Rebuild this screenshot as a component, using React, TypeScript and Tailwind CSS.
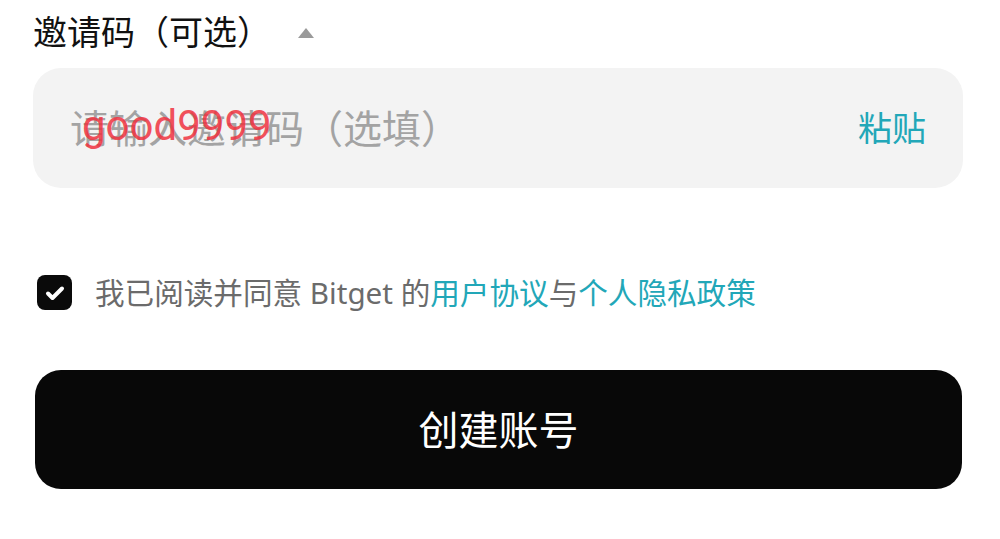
import React from 'react';

const font = "font-['Noto_Sans','Noto_Sans_CJK_SC',sans-serif]";

const App = () => {
  return (
    <div className={`w-[1000px] h-[539px] bg-white ${font} overflow-hidden`}>
      <div className="pl-[33px] pr-[37px] pt-[8px]">
        {/* label */}
        <div className="flex items-center h-[48px]">
          <span className="text-[34px] leading-none text-[#111111]">邀请码（可选）</span>
          <span className="ml-[27px] mt-[2px] w-0 h-0 border-l-[8px] border-r-[8px] border-b-[10px] border-l-transparent border-r-transparent border-b-[#9a9a9a]" />
        </div>

        {/* invite code input */}
        <div className="mt-[12px] h-[120px] rounded-[28px] bg-[#f3f3f3] flex items-center pl-[37px] pr-[37px]">
          <div className="relative flex-1">
            <span className="text-[39px] leading-none text-[#a3a3a3]">请输入邀请码（选填）</span>
            <span className="absolute left-[12px] top-[-3px] text-[42px] leading-none font-['Roboto',sans-serif] text-[#f0323f]/85">
              good9999
            </span>
          </div>
          <span className="text-[34px] leading-none text-[#22a7b8]">粘贴</span>
        </div>

        {/* agreement */}
        <div className="mt-[87px] flex items-center pl-[4px]">
          <span className="w-[35px] h-[35px] rounded-[8px] bg-[#0a0a0a] flex items-center justify-center">
            <svg width="24" height="24" viewBox="0 0 24 24" fill="none" stroke="white" strokeWidth="4" strokeLinecap="round" strokeLinejoin="round">
              <path d="M5 12.5l4.5 4.5L19 7.5" />
            </svg>
          </span>
          <span className="ml-[23px] text-[29.6px] leading-none text-[#6b6b6b] whitespace-nowrap">
            我已阅读并同意 Bitget 的<span className="text-[#22a7b8]">用户协议</span>与<span className="text-[#22a7b8]">个人隐私政策</span>
          </span>
        </div>

        {/* submit */}
        <button className="mt-[60px] ml-[2px] w-[927px] h-[119px] rounded-[26px] bg-[#080808] flex items-center justify-center">
          <span className="text-[40px] leading-none text-white">创建账号</span>
        </button>
      </div>
    </div>
  );
};

export default App;
